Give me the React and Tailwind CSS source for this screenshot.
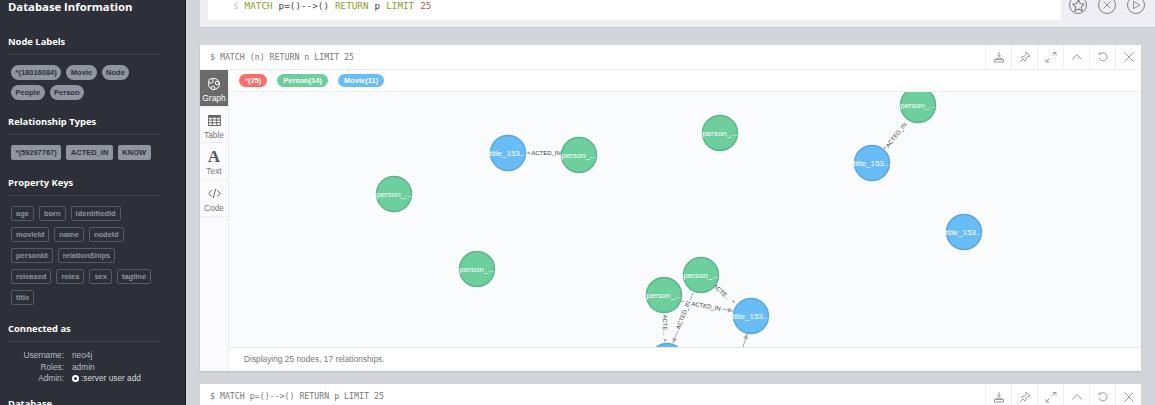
import React from "react";

const sans = "font-['Liberation_Sans',Arial,sans-serif]";
const mono = "font-['DejaVu_Sans_Mono','Liberation_Mono',monospace]";

function Heading({ children }) {
  return (
    <h4 className="font-['Open_Sans',sans-serif] font-bold text-[9.4px] leading-[16px] text-white border-b border-[#3f434d] pb-[4px] mr-[25px]">
      {children}
    </h4>
  );
}

function Tag({ children, kind }) {
  const styles = {
    pill: "rounded-full bg-[#9195a0] text-[#2f323b] px-[4.5px] leading-[15px]",
    rect: "rounded-[2px] bg-[#9195a0] text-[#2f323b] px-[4.5px] leading-[15px]",
    key: "rounded-[2px] border border-[#565a65] text-[#90949e] px-[4px] leading-[14px]",
  };
  return (
    <span className={`${styles[kind]} ${sans} font-bold text-[7.5px] h-[15px] whitespace-nowrap`}>
      {children}
    </span>
  );
}

function Sidebar() {
  const keys = [
    ["age", "born", "identifiedId"],
    ["movieId", "name", "nodeId"],
    ["personId", "relationShips"],
    ["released", "roles", "sex", "tagline"],
    ["title"],
  ];
  return (
    <aside className="w-[186px] h-[405px] shrink-0 overflow-hidden bg-[#2d3039] border-r border-[#17181c] pl-[8px]">
      <h3 className="font-['Open_Sans',sans-serif] font-bold text-[11.3px] leading-[13px] text-white mb-[21px]">
        Database Information
      </h3>
      <Heading>Node Labels</Heading>
      <div className="flex flex-col gap-[5px] pl-[3px] pt-[10px] mb-[14px]">
        <div className="flex gap-[5px]">
          <Tag kind="pill">*(18016084)</Tag>
          <Tag kind="pill">Movie</Tag>
          <Tag kind="pill">Node</Tag>
        </div>
        <div className="flex gap-[5px]">
          <Tag kind="pill">People</Tag>
          <Tag kind="pill">Person</Tag>
        </div>
      </div>
      <Heading>Relationship Types</Heading>
      <div className="flex gap-[5px] pl-[3px] pt-[10px] mb-[15px]">
        <Tag kind="rect">*(59297767)</Tag>
        <Tag kind="rect">ACTED_IN</Tag>
        <Tag kind="rect">KNOW</Tag>
      </div>
      <Heading>Property Keys</Heading>
      <div className="flex flex-col gap-[5px] pl-[3px] pt-[10px] mb-[15px]">
        {keys.map((row, i) => (
          <div key={i} className="flex gap-[5px] h-[16px]">
            {row.map((k) => (
              <Tag key={k} kind="key">{k}</Tag>
            ))}
          </div>
        ))}
      </div>
      <Heading>Connected as</Heading>
      <dl className={`${sans} text-[8.3px] leading-[11.5px] text-[#b9bcc3] pt-[8px] mb-[11px]`}>
        {[
          ["Username:", "neo4j"],
          ["Roles:", "admin"],
          ["Admin:", null],
        ].map(([k, v]) => (
          <div key={k} className="flex">
            <dt className="w-[56px] text-right">{k}</dt>
            <dd className="ml-[8px] flex items-center">
              {v ?? (
                <>
                  <span className="w-[7px] h-[7px] rounded-full border-[2px] border-white bg-[#2d3039] mr-[2px]" />
                  <span className="text-[#d5d7db]">:server user add</span>
                </>
              )}
            </dd>
          </div>
        ))}
      </dl>
      <Heading>Database</Heading>
    </aside>
  );
}

const ic = "w-[12px] h-[12px] fill-none stroke-[#989898] stroke-[1]";

function HeaderIcons({ closeColor }) {
  const icons = [
    <svg key="d" viewBox="0 0 12 12" className={ic}>
      <path d="M1.5 8.5h9v2.5h-9zM3 8.5 4 7h4l1 1.5M6 1v4.5M4.3 3.8 6 5.5l1.7-1.7" />
    </svg>,
    <svg key="p" viewBox="0 0 12 12" className={ic}>
      <path d="M7 1l4 4-1 .6-1-.3-2 2 .1 2-1 .7-3.7-3.7.7-1 2 .1 2-2-.3-1zM3.8 8.2 1.2 10.8" />
    </svg>,
    <svg key="e" viewBox="0 0 12 12" className={ic}>
      <path d="M1.5 10.5 4.5 7.5M7.5 4.5l3-3M8 1.5h3v3M1 8v3h3" />
    </svg>,
    <svg key="u" viewBox="0 0 12 12" className={ic}>
      <path d="M1.5 8.5 6 3.5l4.5 5" />
    </svg>,
    <svg key="r" viewBox="0 0 12 12" className={ic}>
      <path d="M3 3.2A4 4 0 1 1 2.2 7M1.2 2.5 3 3.4l.3-1.9" />
    </svg>,
    <svg key="x" viewBox="0 0 12 12" className={`w-[12px] h-[12px] fill-none stroke-[1] ${closeColor}`}>
      <path d="M1.5 1.5l9 9M10.5 1.5l-9 9" />
    </svg>,
  ];
  return (
    <div className="flex h-full">
      {icons.map((icon, i) => (
        <div key={i} className="w-[26px] h-full border-l border-[#eceef2] flex items-center justify-center">
          {icon}
        </div>
      ))}
    </div>
  );
}

function ViewTab({ label, active, children }) {
  return (
    <div
      className={`h-[36.7px] flex flex-col items-center justify-center border-b border-[#eceef2] pt-[4px] ${sans} text-[8.4px] leading-[10px] ${
        active ? "bg-[#6b6b6b] text-white" : "text-[#777]"
      }`}
    >
      <div className="h-[14px] flex items-center justify-center mb-[2px]">{children}</div>
      {label}
    </div>
  );
}

function Chip({ className, children }) {
  return (
    <span className={`${className} ${sans} rounded-full text-white font-bold text-[7.5px] leading-[13px] px-[6px] whitespace-nowrap`}>
      {children}
    </span>
  );
}

const nodes = [
  ["p", 689, 13, "person_..."],
  ["m", 643, 71, "title_153..."],
  ["p", 491, 41, "person_..."],
  ["m", 279, 61, "title_153..."],
  ["p", 350, 63, "person_..."],
  ["p", 165, 102, "person_..."],
  ["p", 248, 177, "person_..."],
  ["m", 735, 140, "title_153..."],
  ["p", 472, 183, "person_..."],
  ["p", 435, 203, "person_..."],
  ["m", 522, 224, "title_153..."],
  ["m", 438, 269, ""],
];

const rels = [
  { x1: 332, y1: 61, x2: 298, y2: 61, label: "ACTED_IN", lx: 317, ly: 61, a: 0 },
  { x1: 676, y1: 29, x2: 655, y2: 57, label: "ACTED_IN", lx: 667, ly: 43, a: -52 },
  { x1: 487, y1: 192, x2: 506, y2: 211, label: "ACTE...", lx: 493, ly: 200, a: 42 },
  { x1: 452, y1: 209, x2: 504, y2: 219, label: "ACTED_IN", lx: 477, ly: 214, a: 10 },
  { x1: 436, y1: 221, x2: 436, y2: 250, label: "ACTE...", lx: 436, ly: 233, a: 90 },
  { x1: 464, y1: 201, x2: 444, y2: 251, label: "ACTED_IN", lx: 454, ly: 223, a: -69 },
  { x1: 514, y1: 255, x2: 518, y2: 242, label: "", lx: 0, ly: 0, a: 0 },
];

function Graph() {
  return (
    <svg viewBox="0 0 912 255" className="block w-full h-full">
      {rels.map((r, i) => {
        const ang = Math.atan2(r.y2 - r.y1, r.x2 - r.x1);
        const tip = [r.x2, r.y2];
        const b1 = [r.x2 - 5 * Math.cos(ang) + 2.5 * Math.sin(ang), r.y2 - 5 * Math.sin(ang) - 2.5 * Math.cos(ang)];
        const b2 = [r.x2 - 5 * Math.cos(ang) - 2.5 * Math.sin(ang), r.y2 - 5 * Math.sin(ang) + 2.5 * Math.cos(ang)];
        return (
          <g key={i}>
            <line x1={r.x1} y1={r.y1} x2={r.x2} y2={r.y2} className="stroke-[#a5abb6] stroke-[1]" />
            <polygon points={`${tip} ${b1} ${b2}`} className="fill-[#a5abb6]" />
            {r.label && (
              <g transform={`translate(${r.lx} ${r.ly}) rotate(${r.a})`}>
                <rect x={-r.label.length * 2} y={-3.5} width={r.label.length * 4} height={7} className="fill-[#f9fbfd]" />
                <text textAnchor="middle" y={2.2} className="fill-[#444] text-[6px] font-['Liberation_Sans',sans-serif]">
                  {r.label}
                </text>
              </g>
            )}
          </g>
        );
      })}
      {nodes.map(([t, cx, cy, label], i) => (
        <g key={i}>
          <circle
            cx={cx}
            cy={cy}
            r={17.5}
            className={t === "p" ? "fill-[#6dce9e] stroke-[#60b58b] stroke-[1.5]" : "fill-[#68bdf6] stroke-[#5ca8db] stroke-[1.5]"}
          />
          {label && (
            <text x={cx} y={cy + 2.8} textAnchor="middle" className="fill-white text-[8px] font-['Liberation_Sans',sans-serif]">
              {label}
            </text>
          )}
        </g>
      ))}
    </svg>
  );
}

function RoundBtn({ children }) {
  return (
    <div className="w-[18px] h-[18px] rounded-full border border-[#808080] flex items-center justify-center">
      {children}
    </div>
  );
}

export default function App() {
  return (
    <div className="flex h-[405px] w-[1155px] overflow-hidden bg-[#d2d5da]">
      <Sidebar />
      <main className="flex-1 pl-[14px] min-w-0">
        <section className="h-[28px] bg-[#eeeef4] flex pl-[8px] border-b border-[#c8cbd0]">
          <div className={`w-[853px] h-[20px] bg-white flex items-center pl-[25px] pb-[9px] ${mono} text-[9.3px] whitespace-nowrap`}>
            <span className="text-[#c8cbd0]">$</span>
            <span className="ml-[6px] text-[#8f9a2e]">MATCH</span>
            <span className="ml-[6px] text-[#444]">p=()--&gt;()</span>
            <span className="ml-[6px] text-[#8f9a2e]">RETURN</span>
            <span className="ml-[6px] text-[#444]">p</span>
            <span className="ml-[6px] text-[#8f9a2e]">LIMIT</span>
            <span className="ml-[6px] text-[#a15c3a]">25</span>
          </div>
          <div className="flex gap-[11px] ml-[8px] -mt-[4px] h-[18px]">
            <RoundBtn>
              <svg viewBox="0 0 12 12" className="w-[13px] h-[13px] fill-none stroke-[#808080] stroke-[1]">
                <path d="M6 .8l1.6 3.4 3.7.5-2.7 2.6.7 3.7L6 9.2 2.7 11l.7-3.7L.7 4.7l3.7-.5z" />
              </svg>
            </RoundBtn>
            <RoundBtn>
              <svg viewBox="0 0 12 12" className="w-[10px] h-[10px] fill-none stroke-[#808080] stroke-[1]">
                <path d="M2 2l8 8M10 2l-8 8" />
              </svg>
            </RoundBtn>
            <RoundBtn>
              <svg viewBox="0 0 12 12" className="w-[10px] h-[10px] fill-none stroke-[#808080] stroke-[1]">
                <path d="M3 1.5 10.5 6 3 10.5z" />
              </svg>
            </RoundBtn>
          </div>
        </section>

        <section className="mt-[17px] w-[941px] h-[326px] bg-white flex flex-col shadow-[0_1px_2px_rgba(0,0,0,0.12)]">
          <header className="h-[25px] shrink-0 flex items-center justify-between border-b border-[#eceef2] pl-[10px]">
            <span className={`${mono} text-[8.25px] text-[#777] whitespace-pre`}>
              $ MATCH (n) RETURN n LIMIT 25
            </span>
            <HeaderIcons closeColor="stroke-[#a39a96]" />
          </header>
          <div className="flex flex-1 min-h-0">
            <nav className="w-[29px] shrink-0 border-r border-[#eceef2] bg-[#fbfbfd]">
              <ViewTab label="Graph" active>
                <svg viewBox="0 0 14 14" className="w-[14px] h-[14px] fill-none stroke-white stroke-[1]">
                  <circle cx="7" cy="7" r="5.5" />
                  <circle cx="4" cy="4" r="2.2" className="fill-[#6b6b6b]" />
                  <circle cx="10" cy="6" r="1.8" className="fill-[#6b6b6b]" />
                  <circle cx="6" cy="11" r="1.8" className="fill-[#6b6b6b]" />
                </svg>
              </ViewTab>
              <ViewTab label="Table">
                <svg viewBox="0 0 14 12" className="w-[13px] h-[11px] fill-[#666]">
                  <path d="M0 0h14v12H0zM1 3v2h3V3zm4 0v2h4V3zm5 0v2h3V3zM1 6v2h3V6zm4 0v2h4V6zm5 0v2h3V6zM1 9v2h3V9zm4 0v2h4V9zm5 0v2h3V9z" fillRule="evenodd" />
                </svg>
              </ViewTab>
              <ViewTab label="Text">
                <span className="font-['Liberation_Serif',serif] font-bold text-[17px] leading-[14px] text-[#555]">A</span>
              </ViewTab>
              <ViewTab label="Code">
                <svg viewBox="0 0 14 12" className="w-[13px] h-[11px] fill-none stroke-[#555] stroke-[1]">
                  <path d="M4 2.5 .8 6 4 9.5M10 2.5 13.2 6 10 9.5M8.3 1 5.7 11" />
                </svg>
              </ViewTab>
            </nav>
            <div className="flex-1 min-w-0 flex flex-col">
              <div className="h-[22px] shrink-0 flex items-center gap-[10px] pl-[10px] border-b border-[#eceef2]">
                <Chip className="bg-[#ff6c6c]">*(25)</Chip>
                <Chip className="bg-[#6dce9e]">Person(14)</Chip>
                <Chip className="bg-[#68bdf6]">Movie(11)</Chip>
              </div>
              <div className="flex-1 min-h-0 bg-[#f9fbfd] overflow-hidden">
                <Graph />
              </div>
              <div className={`h-[24px] shrink-0 flex items-center pl-[15px] border-t border-[#e6e9ef] bg-white ${sans} text-[8.35px] text-[#777]`}>
                Displaying 25 nodes, 17 relationships.
              </div>
            </div>
          </div>
        </section>

        <section className="mt-[13px] w-[941px] h-[40px] bg-white">
          <header className="h-[25px] flex items-center justify-between pl-[10px]">
            <span className={`${mono} text-[8.25px] text-[#777] whitespace-pre`}>
              $ MATCH p=()--&gt;() RETURN p LIMIT 25
            </span>
            <HeaderIcons closeColor="stroke-[#969ca3]" />
          </header>
        </section>
      </main>
    </div>
  );
}
